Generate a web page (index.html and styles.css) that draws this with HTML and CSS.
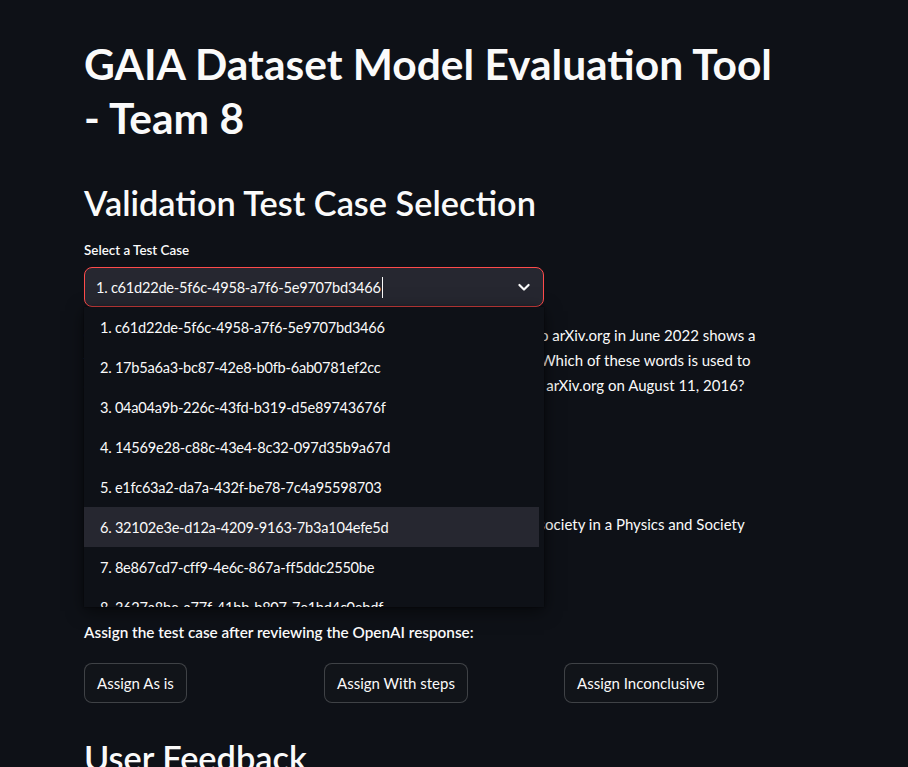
FILE: index.html
```html
<!DOCTYPE html>
<html lang="en">
<head>
<meta charset="utf-8">
<title>GAIA Dataset Model Evaluation Tool - Team 8</title>
<link rel="stylesheet" href="styles.css">
</head>
<body>
<main class="block">
  <h1 class="title">GAIA Dataset Model Evaluation Tool - Team 8</h1>
  <h2 class="subheader">Validation Test Case Selection</h2>

  <div class="field">
    <label class="label">Select a Test Case</label>
    <div class="select-wrap">
      <div class="select">
        <span class="select-value">1. c61d22de-5f6c-4958-a7f6-5e9707bd3466</span><span class="caret"></span>
        <svg class="chevron" width="20" height="20" viewBox="0 0 24 24" fill="none" stroke="#fafafa" stroke-width="2.6" stroke-linecap="round" stroke-linejoin="round"><path d="M6.5 9.5l5.5 5.5 5.5-5.5"/></svg>
      </div>
      <ul class="menu">
        <li class="option">1. c61d22de-5f6c-4958-a7f6-5e9707bd3466</li>
        <li class="option">2. 17b5a6a3-bc87-42e8-b0fb-6ab0781ef2cc</li>
        <li class="option">3. 04a04a9b-226c-43fd-b319-d5e89743676f</li>
        <li class="option">4. 14569e28-c88c-43e4-8c32-097d35b9a67d</li>
        <li class="option">5. e1fc63a2-da7a-432f-be78-7c4a95598703</li>
        <li class="option active">6. 32102e3e-d12a-4209-9163-7b3a104efe5d</li>
        <li class="option">7. 8e867cd7-cff9-4e6c-867a-ff5ddc2550be</li>
        <li class="option">8. 3627a8be-a77f-41bb-b807-7e1bd4c0ebdf</li>
        <li class="option">9. 7619a514-5fa8-43ef-9143-83b66a43d7a4</li>
      </ul>
    </div>
  </div>

  <p class="question">
    <span class="line"><strong>Question:</strong> A paper about AI regulation that was originally submitted to arXiv.org in June 2022 shows a</span>
    <span class="line">figure with three axes, where each axis has a label word at both ends. Which of these words is used to</span>
    <span class="line">describe a type of society in a Physics and Society article submitted to arXiv.org on August 11, 2016?</span>
  </p>

  <p class="response">
    <span class="line"><strong>Response:</strong> The word used in the figure that also describes a type of society in a Physics and Society</span>
  </p>

  <p class="assign-label">Assign the test case after reviewing the OpenAI response:</p>
  <div class="columns">
    <div class="col"><button class="btn">Assign As is</button></div>
    <div class="col"><button class="btn">Assign With steps</button></div>
    <div class="col"><button class="btn">Assign Inconclusive</button></div>
  </div>

  <h2 class="subheader feedback">User Feedback</h2>
</main>
</body>
</html>
```
FILE: styles.css
```css
html, body {
  margin: 0;
  padding: 0;
  background: #0e1117;
  color: #fafafa;
  font-family: "Lato", "Source Sans Pro", sans-serif;
  overflow: hidden;
}

.block {
  width: 704px;
  padding: 37px 0 0 84px;
  display: flex;
  flex-direction: column;
}

.title {
  margin: 0;
  padding-right: 16px;
  font-size: 42.5px;
  font-weight: 700;
  line-height: 54px;
}

.subheader {
  margin: 37px 0 0 0;
  font-size: 34.3px;
  font-weight: 600;
  line-height: 41px;
}

.field {
  margin-top: 17px;
  display: flex;
  flex-direction: column;
}

.label {
  display: block;
  font-size: 13.4px;
  font-weight: 600;
  line-height: 21px;
  margin: 0 0 6px 0;
}

.select-wrap {
  position: relative;
  width: 460px;
}

.select {
  box-sizing: border-box;
  height: 40px;
  background: #262730;
  border: 1px solid #ff4b4b;
  border-radius: 8px;
  display: flex;
  align-items: center;
  padding: 0 9px 0 11px;
}

.select-value {
  font-size: 14.6px;
  letter-spacing: -0.25px;
  white-space: nowrap;
}

.caret {
  display: inline-block;
  width: 1px;
  height: 21px;
  background: #fafafa;
  margin-left: 1px;
}

.chevron {
  margin-left: auto;
}

.menu {
  position: absolute;
  top: 100%;
  left: 0;
  width: 460px;
  height: 300px;
  margin: 0;
  padding: 0;
  list-style: none;
  overflow: hidden;
  background: #0e1117;
  box-shadow: 0 4px 16px rgba(0, 0, 0, 0.55), 0 0 2px rgba(0, 0, 0, 0.6);
  z-index: 10;
}

.option {
  box-sizing: border-box;
  width: 455px;
  height: 40px;
  display: flex;
  align-items: center;
  padding-left: 16px;
  font-size: 14.6px;
  letter-spacing: -0.25px;
  white-space: nowrap;
}

.option.active {
  background: #262730;
}

.question,
.response {
  margin: 16px 0 0 0;
  font-size: 15px;
  line-height: 25px;
}

.question strong,
.response strong {
  font-weight: 700;
}

.question strong {
  letter-spacing: 0.6px;
}

.response strong {
  letter-spacing: 1.3px;
}

.response {
  margin-top: 114px;
}

.line {
  display: block;
  white-space: nowrap;
}

.assign-label {
  margin: 83px 0 0 0;
  font-size: 15.3px;
  font-weight: 600;
  line-height: 25px;
}

.columns {
  margin-top: 18px;
  display: grid;
  grid-template-columns: repeat(3, 1fr);
  gap: 16px;
}

.btn {
  box-sizing: border-box;
  height: 40px;
  padding: 0 12px;
  background: #111419;
  color: #fafafa;
  border: 1px solid rgba(250, 250, 250, 0.2);
  border-radius: 8px;
  font-family: "Lato", "Source Sans Pro", sans-serif;
  font-size: 15px;
  line-height: 1;
}

.feedback {
  margin-top: 34px;
}
```
